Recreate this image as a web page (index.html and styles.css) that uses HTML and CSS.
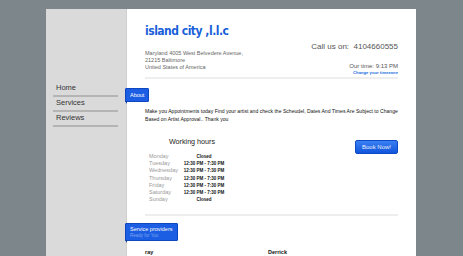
FILE: index.html
```html
<!DOCTYPE html>
<html lang="en">
<head>
  <meta charset="UTF-8" />
  <title>island city ,l.l.c</title>
  <link rel="stylesheet" href="styles.css">
</head>
<body>

<div class="page">
  <div class="sidebar">
    <ul class="nav">
      <li><a href="#">Home</a></li>
      <li><a href="#">Services</a></li>
      <li><a href="#">Reviews</a></li>
    </ul>
  </div>

  <div class="content">
    <div class="header">
      <div class="business">
        <h1>island city ,l.l.c</h1>
        <div class="address">
          Maryland 4005 West Belvedere Avenue,<br>
          21215 Baltimore<br>
          United States of America
        </div>
      </div>
      <div class="contact">
        <div class="phone">Call us on:&nbsp; 4104660555</div>
        <div class="time">Our time: 9:13 PM</div>
        <a class="tz" href="#">Change your timezone</a>
      </div>
    </div>

    <hr>

    <div class="badge">About</div>
    <p class="about"><span class="line">Make you Appointments today Find your artist and check the Scheudel, Dates And Times Are Subject to Change</span><br>Based on Artist Approval.. Thank you</p>

    <div class="hours-row">
      <div class="hours">
        <h3>Working hours</h3>
        <table>
          <tr><td class="day">Monday</td><td class="slot">Closed</td></tr>
          <tr><td class="day">Tuesday</td><td class="slot">12:30 PM - 7:30 PM</td></tr>
          <tr><td class="day">Wednesday</td><td class="slot">12:30 PM - 7:30 PM</td></tr>
          <tr><td class="day">Thursday</td><td class="slot">12:30 PM - 7:30 PM</td></tr>
          <tr><td class="day">Friday</td><td class="slot">12:30 PM - 7:30 PM</td></tr>
          <tr><td class="day">Saturday</td><td class="slot">12:30 PM - 7:30 PM</td></tr>
          <tr><td class="day">Sunday</td><td class="slot">Closed</td></tr>
        </table>
      </div>
      <button class="book">Book Now!</button>
    </div>

    <hr class="sep">

    <div class="badge badge-tall">
      Service providers
      <span class="sub">Ready for You</span>
    </div>

    <div class="providers">
      <div class="provider">ray</div>
      <div class="provider">Derrick</div>
    </div>
  </div>
</div>

</body>
</html>
```

FILE: styles.css
```css
body {
  margin: 0;
  padding: 0;
  background-color: #7c868b;
  font-family: 'Liberation Sans', Arial, sans-serif;
  height: 256px;
  overflow: hidden;
}

.page {
  display: flex;
  width: 370px;
  margin: 9px 0 0 46px;
  min-height: 260px;
}

.sidebar {
  flex: none;
  width: 80px;
  background: #dadada;
  border-right: 1px solid #cfcfcf;
}

.nav {
  list-style: none;
  margin: 73px 0 0 7px;
  padding: 0;
  width: 65px;
}

.nav li {
  height: 13px;
  line-height: 12px;
  border-bottom: 2px solid #b4b4b4;
}

.nav a {
  display: block;
  padding-left: 3px;
  font-size: 7.5px;
  color: #333;
  text-decoration: none;
}

.content {
  flex: 1;
  min-width: 0;
  background: #fff;
  padding: 13px 18px 0 18px;
}

.header {
  display: flex;
  justify-content: space-between;
}

h1 {
  margin: 0;
  font-family: 'DejaVu Sans Condensed', 'DejaVu Sans', sans-serif;
  font-stretch: condensed;
  font-size: 12px;
  line-height: 18px;
  font-weight: bold;
  letter-spacing: -0.5px;
  color: #1a5fd9;
}

.address {
  margin-top: 10px;
  font-size: 5.5px;
  line-height: 7px;
  color: #666;
}

.contact {
  text-align: right;
  padding-top: 20px;
}

.phone {
  font-size: 8px;
  line-height: 10px;
  color: #555;
}

.time {
  margin-top: 10px;
  font-size: 6px;
  line-height: 8px;
  color: #555;
}

.tz {
  display: block;
  font-size: 4.2px;
  line-height: 6px;
  color: #1a6ee0;
  text-decoration: none;
  font-weight: bold;
}

hr {
  border: none;
  border-top: 2px solid #eeeeee;
  margin: 1px 0 0 0;
}

hr.sep {
  margin-top: 11px;
}

.badge {
  display: inline-block;
  position: relative;
  margin: 9px 0 0 -20px;
  padding: 0 4px;
  height: 12px;
  line-height: 12px;
  background: #1c5ee3;
  border: 1px solid #0e46c0;
  border-radius: 1px;
  color: #fff;
  font-size: 5.5px;
}

.badge::before {
  content: "";
  position: absolute;
  left: -1px;
  bottom: -3px;
  border-top: 3px solid #0a3a9a;
  border-left: 2px solid transparent;
}

.about {
  margin: 5px 0 0 0;
  font-size: 5.1px;
  line-height: 8px;
  color: #111;
}

.about .line {
  white-space: nowrap;
}

.hours-row {
  display: flex;
  justify-content: space-between;
  align-items: flex-start;
  margin-top: 14px;
}

.hours {
  width: 90px;
}

h3 {
  margin: 0 0 6px 0;
  text-align: center;
  font-size: 7.2px;
  line-height: 10px;
  font-weight: normal;
  color: #222;
  padding-left: 4px;
}

table {
  border-collapse: collapse;
  margin-left: 4px;
}

td {
  padding: 0;
  height: 7.2px;
  line-height: 7.2px;
}

.day {
  width: 34px;
  font-size: 5.5px;
  color: #999;
}

.slot {
  width: 42px;
  text-align: center;
  font-size: 4.5px;
  font-weight: bold;
  color: #111;
}

.book {
  margin-top: 3px;
  width: 43px;
  height: 14px;
  padding: 0;
  border: 1px solid #0d4ac8;
  border-radius: 2px;
  background: linear-gradient(#3a80f2, #1255dc);
  color: #e8eeff;
  font-family: 'Liberation Sans', Arial, sans-serif;
  font-size: 6px;
}

.badge-tall {
  margin-top: 7px;
  height: 18px;
  line-height: 7px;
  padding-top: 2px;
  padding-right: 4px;
  box-sizing: border-box;
}

.badge-tall .sub {
  display: block;
  color: #7fa4ef;
  font-size: 4.5px;
  line-height: 6px;
}

.providers {
  display: flex;
  margin-top: 8px;
}

.provider {
  width: 123px;
  font-size: 5.5px;
  line-height: 6px;
  font-weight: bold;
  color: #111;
}
```
